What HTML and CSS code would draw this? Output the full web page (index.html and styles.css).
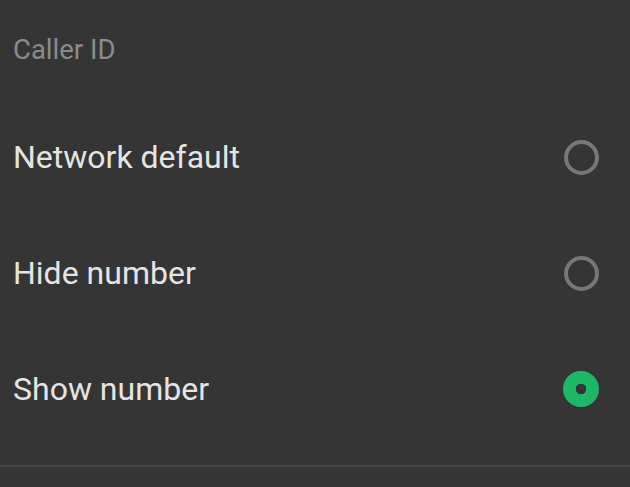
FILE: index.html
```html
<!DOCTYPE html>
<html>
<head>
    <title>Caller ID</title>
    <link rel="stylesheet" href="styles.css">
</head>
<body>

<div class="dialog">
    <div class="dialog-title">Caller ID</div>

    <div class="option-list">
        <label class="option">
            <span class="option-label">Network default</span>
            <input type="radio" name="caller_id" value="default">
            <span class="radio"></span>
        </label>
        <label class="option">
            <span class="option-label">Hide number</span>
            <input type="radio" name="caller_id" value="hide">
            <span class="radio"></span>
        </label>
        <label class="option">
            <span class="option-label">Show number</span>
            <input type="radio" name="caller_id" value="show" checked>
            <span class="radio"></span>
        </label>
    </div>

    <div class="dialog-footer"></div>
</div>

</body>
</html>
```

FILE: styles.css
```css
body {
    margin: 0; background-color: #353535; font-family: Roboto, 'Noto Sans', sans-serif; overflow: hidden;
}

.dialog { width: 630px; height: 487px; background-color: #353535;
}

.dialog-title { height: 99px; display: flex; align-items: center; padding-left: 13px; font-size: 27.5px; color: #8b8b8b;
}

.option-list { padding-bottom: 18px; border-bottom: solid #474747 2px;
}

.option { height: 116px; display: flex; align-items: center; justify-content: space-between; padding: 0 31px 0 13px; cursor: pointer;
}

.option-label { font-size: 32px; color: #e4e4e4;
}

.option input { display: none;
}

.radio { width: 27px; height: 27px; border: solid #777 4.5px; border-radius: 50%; box-sizing: content-box;
}

.option input:checked + .radio { border: none; width: 36px; height: 36px; background: radial-gradient(circle, #353535 0, #353535 5px, #1db865 5.5px);
}
```
